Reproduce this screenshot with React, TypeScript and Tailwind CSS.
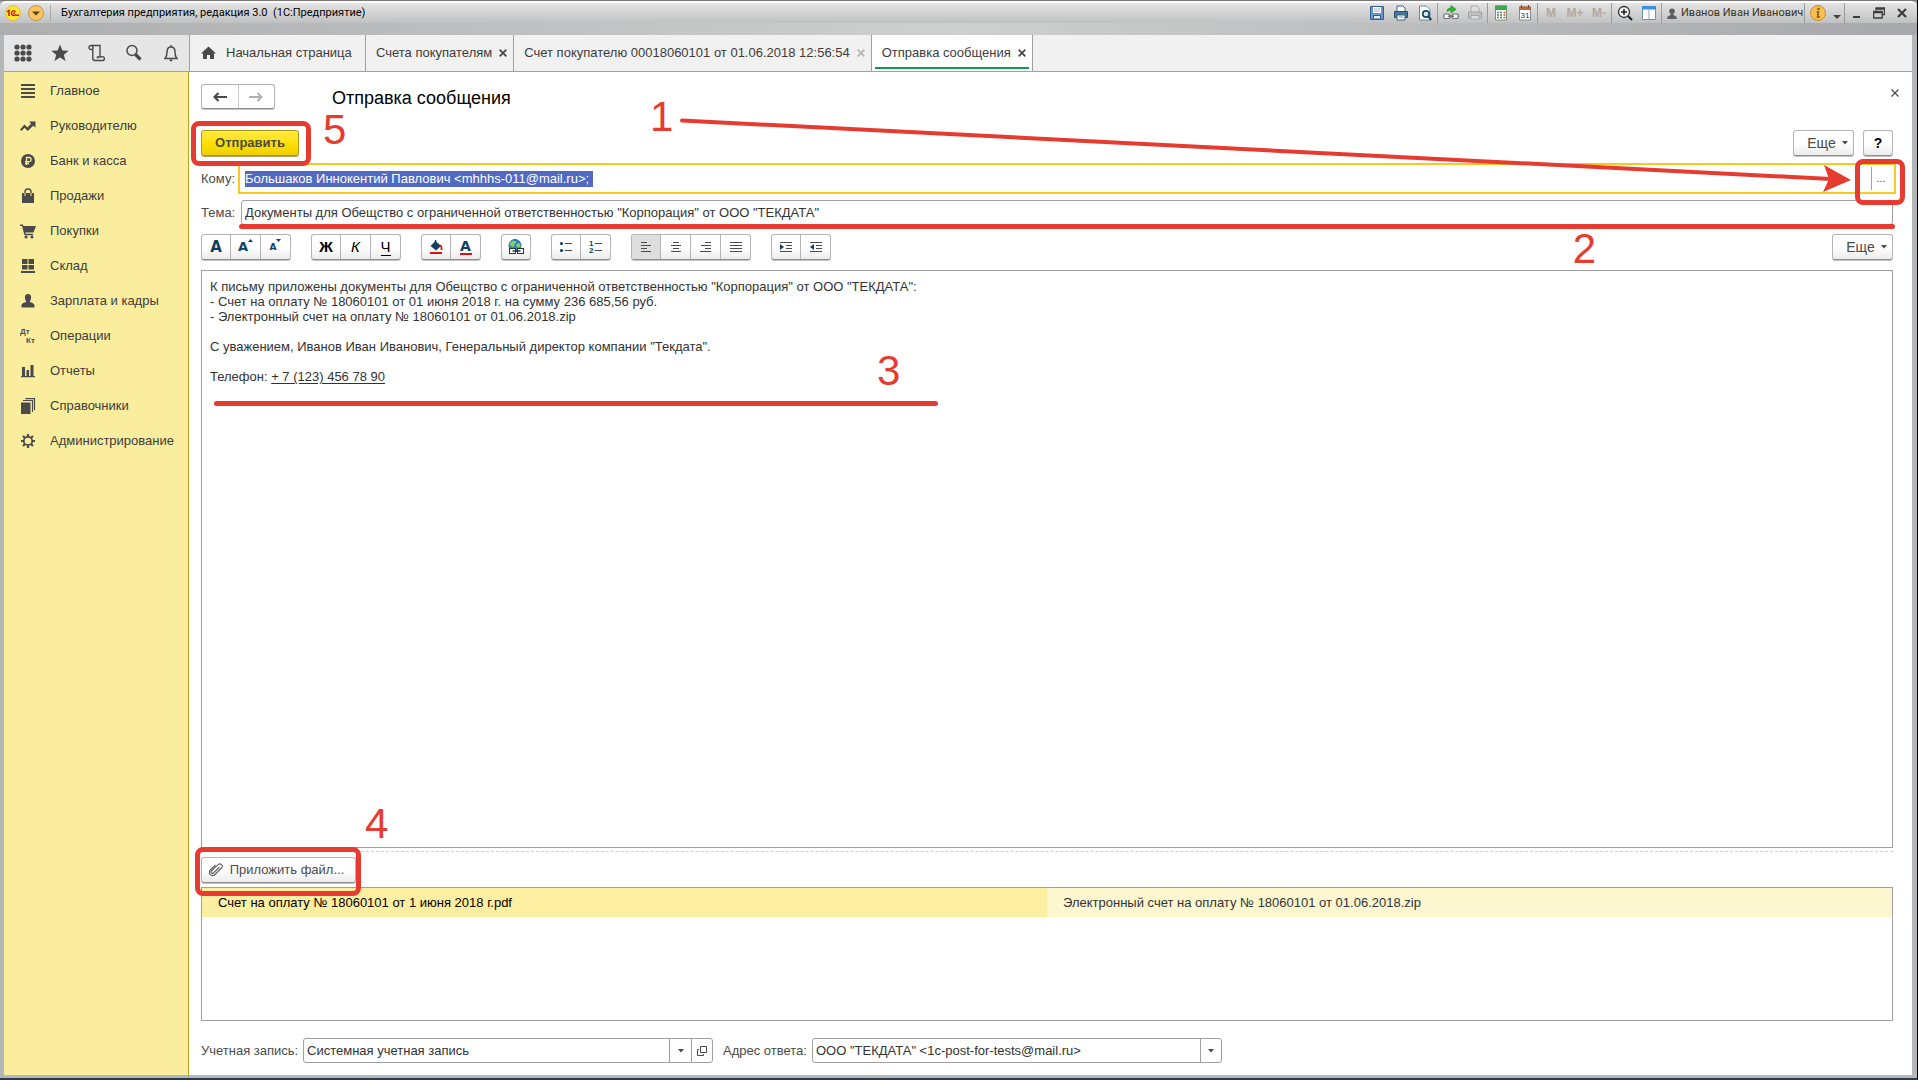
import { useEffect, useRef, type ReactNode } from 'react'
import clsx from 'clsx'

const INK = '#4a4a4a'
const NAVY = '#123f5f'

/* Sidebar icons */

const menuIcons: Record<string, ReactNode> = {
  main: <path d="M1 1h14v2H1zM1 5h14v2H1zM1 9h14v2H1zM1 13h14v2H1z" />,
  manager: (
    <path d="M0 11.5 4.500 6.500l3 3L11 5.800 9.200 3.500H15.500v6L13.200 7.700 7.700 13l-3.200-3.200L1.500 13z" />
  ),
  bank: (
    <>
      <circle cx="8" cy="8" r="7" />
      <path d="M6.500 12V4.500h2.500a2 2 0 0 1 0 4.200H5M5 10.500h4" fill="none" stroke="#fbed9e" strokeWidth="1.300" />
    </>
  ),
  sales: (
    <>
      <path d="M2 5h12v10H2z" />
      <path d="M5 8V4a3 3 0 0 1 6 0v4" fill="none" stroke={INK} strokeWidth="1.400" />
      <path d="M5 5v3M11 5v3" stroke="#fbed9e" strokeWidth="1" />
    </>
  ),
  purchases: (
    <>
      <path d="M0 1.500h3L3.500 3H16l-2.500 6.500H5.300l.4 1.300H13v1.400H4.500L2 3H0z" />
      <circle cx="6" cy="14" r="1.500" />
      <circle cx="12" cy="14" r="1.500" />
    </>
  ),
  stock: <path d="M2 1h5.500v5H2zM8.500 1H14v5H8.500zM2 7h5.500v4.500H2zM8.500 7H14v4.500H8.500zM1 13h14v2H1z" />,
  staff: (
    <path d="M8 1c2.200 0 3.300 1.600 3.100 3.800C10.900 7 9.800 8.500 9.800 8.500c0 1.200 4.700.8 4.700 4.500v1.500h-13V13c0-3.700 4.700-3.300 4.700-4.500 0 0-1.100-1.500-1.300-3.700C4.700 2.600 5.800 1 8 1z" />
  ),
  operations: (
    <g fontFamily="Liberation Sans, sans-serif" fontWeight="700" fontSize="8">
      <text x="0" y="6">Дт</text>
      <text x="6" y="15">Кт</text>
    </g>
  ),
  reports: <path d="M2 4h3v9H2zM6.500 7h2.500v6H6.500zM10.500 2h3v11h-3zM1 13h14v1.300H1z" />,
  catalogs: (
    <>
      <path d="M1 4.500h9.500V16H1z" />
      <path d="M3 2.500h9.500V14M5.500.7h9V12" fill="none" stroke={INK} strokeWidth="1.200" />
    </>
  ),
  admin: (
    <>
      <circle cx="8" cy="8" r="4.200" fill="none" stroke={INK} strokeWidth="1.800" />
      <path
        d="M8 1v2.500M8 12.500V15M1 8h2.500M12.500 8H15M3 3l1.800 1.800M11.200 11.200 13 13M13 3l-1.800 1.800M4.800 11.200 3 13"
        stroke={INK}
        strokeWidth="2.200"
      />
    </>
  ),
}

const menu = [
  { id: 'main', title: 'Главное' },
  { id: 'manager', title: 'Руководителю' },
  { id: 'bank', title: 'Банк и касса' },
  { id: 'sales', title: 'Продажи' },
  { id: 'purchases', title: 'Покупки' },
  { id: 'stock', title: 'Склад' },
  { id: 'staff', title: 'Зарплата и кадры' },
  { id: 'operations', title: 'Операции' },
  { id: 'reports', title: 'Отчеты' },
  { id: 'catalogs', title: 'Справочники' },
  { id: 'admin', title: 'Администрирование' },
]

/* Title bar */

function TitleButton({ label, className = 'w-6', children }: { label: string; className?: string; children: ReactNode }) {
  return (
    <button type="button" aria-label={label} className={clsx('flex h-5 shrink-0 items-center justify-center', className)}>
      {children}
    </button>
  )
}

function TitleIcon({ children }: { children: ReactNode }) {
  return (
    <svg width="16" height="16" viewBox="0 0 16 16">
      {children}
    </svg>
  )
}

function TitleSeparator() {
  return <span className="mr-px h-5 w-px bg-[#9b9b9b]" />
}

const printerShape = (
  <>
    <path d="M4 1h6l2 2v4H4z" fill="#fff" stroke="#40647f" />
    <path d="M1.500 6.500h13v6h-13z" fill="#46769a" stroke="#244f70" />
    <path d="M4 10h8v5H4z" fill="#fff" stroke="#40647f" />
    <path d="M5.500 12h5" stroke="#7d98ab" />
  </>
)

const linkShape = (
  <g fill="#f5f5f5" stroke="#707070" strokeWidth="1.200">
    <rect x=".8" y="9" width="6" height="4.500" rx="1" />
    <rect x="9.200" y="9" width="6" height="4.500" rx="1" />
    <path d="M5 11.200h6" strokeWidth="1.500" />
  </g>
)

function TitleBar() {
  return (
    <header className="border-t border-[#7c7879] bg-linear-to-r from-[#adaeb0] via-[#cfcfcf] to-[#a7a8ab] pb-3">
      <div className="flex h-[22px] items-center rounded-t-md border-t-2 border-white bg-linear-to-b from-[#e4e4e4] to-[#c0c1c2] pr-[3px] pl-1">
        <TitleButton label="Главное меню" className="w-[18px]">
          <svg width="16" height="16" viewBox="0 0 16 16">
            <circle cx="8" cy="8" r="7.500" fill="#ffe631" stroke="#e3bd4a" />
            <path d="M2 7l2-1.500V11" fill="none" stroke="#d41111" strokeWidth="1.500" />
            <path d="M10.500 6.800a2.200 2.200 0 1 0-2.200 3.400H14M10 8.300H8.500" fill="none" stroke="#d41111" strokeWidth="1.400" />
          </svg>
        </TitleButton>
        <TitleButton label="Сервис" className="ml-1 w-5">
          <svg width="16" height="16" viewBox="0 0 16 16">
            <circle cx="8" cy="8" r="7.500" fill="#f8c561" stroke="#cc9344" />
            <path d="M4 6.500h8L8 10.500z" fill="#5b4214" />
          </svg>
        </TitleButton>
        <span className="ml-1 h-4 w-px bg-[#aaa]" />
        <h1 className="ml-[10px] grow pt-px font-[Roboto,sans-serif] text-[11px] whitespace-pre text-black">
          Бухгалтерия предприятия, редакция 3.0  (1С:Предприятие)
        </h1>

        <TitleButton label="Сохранить">
          <TitleIcon>
            <path d="M1.500 1.500h13v13h-13z" fill="#6c95cb" stroke="#365d91" />
            <path d="M4 2h8v6H4z" fill="#fff" />
            <path d="M5 4h6M5 6h6" stroke="#9bb5d8" />
            <path d="M4.500 10.500h7V14h-7z" fill="#e8eef6" stroke="#365d91" />
          </TitleIcon>
        </TitleButton>
        <TitleButton label="Печать">
          <TitleIcon>{printerShape}</TitleIcon>
        </TitleButton>
        <TitleButton label="Предварительный просмотр">
          <TitleIcon>
            <path d="M2.500 1h7l3.500 3.500V15H2.500z" fill="#fff" stroke="#6d8796" />
            <circle cx="9" cy="9" r="3.200" fill="#d7ecf7" stroke="#15486b" strokeWidth="1.700" />
            <path d="m11.300 11.500 3 3.500" stroke="#15486b" strokeWidth="2" />
          </TitleIcon>
        </TitleButton>
        <TitleSeparator />
        <TitleButton label="Получить ссылку">
          <TitleIcon>
            {linkShape}
            <path d="M4 6.500C4 3.500 6 3 8 3V.500l5 3.800L8 8V5.500c-2 0-3 0-4 1z" fill="#2fb62a" stroke="#13820f" strokeWidth=".6" />
          </TitleIcon>
        </TitleButton>
        <TitleButton label="Печать ссылки">
          <TitleIcon>
            <path d="M4 1h6l2 2v5H4z" fill="#ddd" stroke="#a8a8a8" />
            <path d="M1.500 7h13v6h-13z" fill="#c0c0c0" stroke="#a0a0a0" />
            <path d="M4 10.500h8V14H4z" fill="#ddd" stroke="#a8a8a8" />
          </TitleIcon>
        </TitleButton>
        <TitleSeparator />
        <TitleButton label="Калькулятор">
          <TitleIcon>
            <path d="M2.500 1h11v14h-11z" fill="#fff" stroke="#6c9a72" />
            <path d="M2 .500h12V5H2z" fill="#3fa650" />
            <path d="M4 7.500h2M7 7.500h2M4 10h2M7 10h2M4 12.500h2M7 12.500h2" stroke="#5b7f60" strokeWidth="1.300" />
            <path d="M10.500 7.500h2M10.500 10h2M10.500 12.500h2" stroke="#c7504c" strokeWidth="1.300" />
          </TitleIcon>
        </TitleButton>
        <TitleButton label="Календарь">
          <TitleIcon>
            <path d="M2.500 2h11v13h-11z" fill="#fff" stroke="#8b8b8b" />
            <path d="M2 1.500h12V5H2z" fill="#b66a3c" />
            <path d="M4.500 0v3M11.500 0v3" stroke="#7a4526" />
            <text x="3.500" y="13" fontSize="8" fontFamily="Liberation Sans, sans-serif" fill="#333">31</text>
          </TitleIcon>
        </TitleButton>
        <TitleSeparator />
        {['M', 'M+', 'M-'].map((m) => (
          <TitleButton key={m} label={m}>
            <span className="font-['Liberation_Sans',sans-serif] text-[12px] font-bold text-[#b5a79c]">{m}</span>
          </TitleButton>
        ))}
        <TitleSeparator />
        <TitleButton label="Масштаб">
          <TitleIcon>
            <circle cx="7" cy="7" r="5.500" fill="#f2f2f2" stroke="#333" strokeWidth="1.300" />
            <path d="M7 4v6M4 7h6" stroke="#222" strokeWidth="1.500" />
            <path d="m11 11 4 4" stroke="#222" strokeWidth="2.200" />
          </TitleIcon>
        </TitleButton>
        <TitleButton label="Панели">
          <TitleIcon>
            <path d="M1.500 1.500h13v13h-13z" fill="#fff" stroke="#6f8fae" />
            <path d="M1 1h14v3.500H1z" fill="#3d8edb" />
            <path d="M8 4.500V14" stroke="#8da6be" />
          </TitleIcon>
        </TitleButton>
        <TitleSeparator />
        <button
          type="button"
          className="ml-1 flex w-[137px] shrink-0 items-center gap-1 font-[Roboto,sans-serif] text-[11px] whitespace-nowrap text-[#3f3215]"
        >
          <svg width="10" height="11" viewBox="0 0 10 12" fill="#5d5d5d" className="shrink-0">
            <circle cx="5" cy="3.500" r="3" />
            <path d="M3.500 5h3v2.500l3.500 2V12H0V9.500l3.500-2z" />
          </svg>
          Иванов Иван Иванович
        </button>
        <TitleSeparator />
        <TitleButton label="О программе">
          <svg width="16" height="16" viewBox="0 0 16 16">
            <circle cx="8" cy="8" r="7.500" fill="#f7bf50" stroke="#c98c33" />
            <circle cx="8.500" cy="4" r="1.300" fill="#8a5a14" />
            <path d="M6.500 7h2L7.500 12H10" fill="none" stroke="#8a5a14" strokeWidth="1.600" />
          </svg>
        </TitleButton>
        <TitleButton label="Еще команды" className="w-[14px]">
          <svg width="8" height="4" viewBox="0 0 8 4" className="mt-2">
            <path d="M0 0h8L4 4z" fill="#444" />
          </svg>
        </TitleButton>
        <TitleSeparator />
        <TitleButton label="Свернуть" className="w-[22px]">
          <svg width="12" height="12" viewBox="0 0 12 12">
            <path d="M2 10h7" stroke="#3c3c3c" strokeWidth="2" />
          </svg>
        </TitleButton>
        <TitleButton label="Восстановить" className="w-[22px]">
          <svg width="12" height="12" viewBox="0 0 12 12" fill="none" stroke="#3c3c3c">
            <path d="M3 3.500V1h8.500v6.500H9.500M3 2h8" strokeWidth="1.300" />
            <path d="M.700 4.500h8.500V11H.700zM1 5.500h8" strokeWidth="1.300" />
          </svg>
        </TitleButton>
        <TitleButton label="Закрыть">
          <svg width="12" height="12" viewBox="0 0 12 12">
            <path d="m2 2 8 8M10 2l-8 8" stroke="#3c3c3c" strokeWidth="2.200" />
          </svg>
        </TitleButton>
      </div>
    </header>
  )
}

/* Tabs */

const tools: { label: string; icon: ReactNode }[] = [
  {
    label: 'Все функции',
    icon: [3, 9, 15].map((y) => [3, 9, 15].map((x) => <circle key={`${x}-${y}`} cx={x} cy={y} r="2.600" fill={INK} />)),
  },
  { label: 'Избранное', icon: <path d="M9 .500l2.400 5.900 6.300.3-4.900 4 1.700 6.200L9 13.400l-5.500 3.500 1.700-6.200-4.900-4 6.300-.3z" fill={INK} /> },
  {
    label: 'История',
    icon: (
      <path
        d="M4.500 5.500H3a2 2 0 1 1 0-4h9v11.500M4.800 3.500V14.500a2 2 0 0 0 2 2H15a2 2 0 1 0-1.800-3.500H9.500v1.500M3 1.500a2 2 0 0 1 2 2"
        fill="none"
        stroke={INK}
        strokeWidth="1.400"
      />
    ),
  },
  {
    label: 'Поиск',
    icon: (
      <>
        <circle cx="7" cy="6.500" r="5" fill="none" stroke={INK} strokeWidth="1.500" />
        <path d="m10.500 10.500 5 5" stroke={INK} strokeWidth="3.200" />
      </>
    ),
  },
  {
    label: 'Оповещения',
    icon: (
      <>
        <path d="M2 14.500h14M3.500 14c1.500-2 1.500-3 1.500-6 0-3 1.500-5 4-5s4 2 4 5c0 3 0 4 1.500 6M9 3V1" fill="none" stroke={INK} strokeWidth="1.500" />
        <path d="M7 15.500h4L9 18z" fill={INK} />
      </>
    ),
  },
]

const tabs = [
  { title: 'Счета покупателям' },
  { title: 'Счет покупателю 00018060101 от 01.06.2018 12:56:54', locked: true },
  { title: 'Отправка сообщения', active: true },
]

function Cross() {
  return (
    <svg width="8" height="8" viewBox="0 0 8 8">
      <path d="m.700.700 6.600 6.600M7.300.700.700 7.300" stroke="currentColor" strokeWidth="1.800" />
    </svg>
  )
}

function TabBar() {
  return (
    <nav className="flex h-[37px] border-b border-[#a0a0a0] bg-[#f1f1f1]">
      <div className="flex w-[186px] shrink-0 items-center border-r border-[#a0a0a0] bg-[#e6e6e6]">
        {tools.map((tool) => (
          <button key={tool.label} type="button" aria-label={tool.label} className="flex flex-1 justify-center">
            <svg width="18" height="18" viewBox="0 0 18 18">
              {tool.icon}
            </svg>
          </button>
        ))}
      </div>
      <button type="button" className="flex w-44 items-center gap-[10px] border-r border-[#a0a0a0] pl-[11px]">
        <svg width="15" height="14" viewBox="0 0 15 14" fill={INK}>
          <path d="M7.500.500 15 7.500h-2V13H9V9H6v4H2V7.500H0z" />
        </svg>
        Начальная страница
      </button>
      {tabs.map((tab) => (
        <div
          key={tab.title}
          className={clsx(
            'relative flex items-center gap-[7px] border-r border-[#a0a0a0] pr-[6px] pl-[10px] whitespace-nowrap',
            tab.active && 'bg-white',
          )}
        >
          <button type="button">{tab.title}</button>
          <button type="button" aria-label="Закрыть вкладку" className={tab.locked ? 'text-[#b5b5b5]' : 'text-[#4a4a4a]'}>
            <Cross />
          </button>
          {tab.active && <span className="absolute inset-x-[3px] bottom-[2px] h-[2px] bg-[#0f9a52]" />}
        </div>
      ))}
    </nav>
  )
}

/* Form parts */

const buttonFace =
  'flex h-[26px] items-center justify-center rounded-[3px] border border-[#b4b4b4] border-b-[#8f8f8f] bg-linear-to-b from-white from-50% to-[#ececec] shadow-[0_1px_0_#c4c4c4]'

function Caret() {
  return (
    <svg width="6" height="4" viewBox="0 0 6 4">
      <path d="M0 0h6L3 3.500z" fill={INK} />
    </svg>
  )
}

function MoreButton() {
  return (
    <button type="button" className={clsx(buttonFace, 'w-[61px] gap-[6px] pl-2 text-[14px]')}>
      Еще
      <Caret />
    </button>
  )
}

type Tool = { label: string; icon: ReactNode; pressed?: boolean }

function ToolGroup({ items }: { items: Tool[] }) {
  return (
    <div className="flex h-[26px] divide-x divide-[#b4b4b4] overflow-hidden rounded-[3px] border border-[#b4b4b4] border-b-[#8f8f8f] bg-linear-to-b from-white from-50% to-[#ececec] shadow-[0_1px_0_#c4c4c4]">
      {items.map((item, i) => (
        <button
          key={item.label}
          type="button"
          aria-label={item.label}
          aria-pressed={item.pressed}
          className={clsx(
            'flex items-center justify-center aria-pressed:bg-[#dedede]',
            items.length === 1 ? 'w-7' : i === 0 || i === items.length - 1 ? 'w-[29px]' : 'w-[30px]',
          )}
        >
          {item.icon}
        </button>
      ))}
    </div>
  )
}

function Glyph({ children }: { children: ReactNode }) {
  return (
    <svg width="16" height="16" viewBox="0 0 16 16" fill="none" stroke={INK}>
      {children}
    </svg>
  )
}

const letterA = "font-['DejaVu_Sans',sans-serif] leading-4 font-bold text-[#123f5f]"
const letterFormat = "font-['Liberation_Sans',sans-serif] text-[15px] leading-4 text-black"

const toolGroups: Tool[][] = [
  [
    { label: 'Шрифт', icon: <span className={clsx(letterA, 'text-[15px]')}>A</span> },
    {
      label: 'Увеличить шрифт',
      icon: (
        <span className={clsx(letterA, 'flex items-start text-[13px]')}>
          A
          <svg width="5" height="3" viewBox="0 0 5 3">
            <path d="M0 3h5L2.500 0z" fill={NAVY} />
          </svg>
        </span>
      ),
    },
    {
      label: 'Уменьшить шрифт',
      icon: (
        <span className={clsx(letterA, 'flex items-start text-[9px]')}>
          A
          <svg width="5" height="3" viewBox="0 0 5 3">
            <path d="M0 0h5L2.500 3z" fill={NAVY} />
          </svg>
        </span>
      ),
    },
  ],
  [
    { label: 'Полужирный', icon: <span className={clsx(letterFormat, 'font-bold')}>Ж</span> },
    { label: 'Курсив', icon: <span className={clsx(letterFormat, 'italic')}>К</span> },
    { label: 'Подчеркнутый', icon: <span className={clsx(letterFormat, 'border-b border-black')}>Ч</span> },
  ],
  [
    {
      label: 'Цвет фона',
      icon: (
        <Glyph>
          <path d="M7.500 2 13 7l-5 4.500L2.500 7z" fill={NAVY} stroke="none" />
          <path d="M7.500 5V1" stroke={NAVY} strokeWidth="1.500" />
          <path d="M11.500 6c2 .5 2.300 2.500 2 5" stroke="#e01010" strokeWidth="1.800" />
          <path d="M2 14h12" stroke="#e01010" strokeWidth="2" />
        </Glyph>
      ),
    },
    {
      label: 'Цвет текста',
      icon: (
        <span className="flex flex-col items-center">
          <span className="font-['DejaVu_Sans',sans-serif] text-[14px] leading-[13px] font-bold text-[#123f5f]">A</span>
          <span className="h-[2px] w-3 bg-[#e01010]" />
        </span>
      ),
    },
  ],
  [
    {
      label: 'Гиперссылка',
      icon: (
        <Glyph>
          <circle cx="7" cy="6.500" r="6" fill="#2487cf" stroke="#1b69a8" />
          <path d="M3 3c2-2 4-1.500 5-.5S6 5 6 7 3 7 2 6s0-2 1-3zM9 5c1-1 3-1 3.500 1S10 9 9 8s-1-2 0-3z" fill="#8fcf4c" stroke="none" />
          <rect x="1.500" y="9.500" width="6" height="5" fill="#fff" stroke="#333" />
          <rect x="9.500" y="9.500" width="6" height="5" fill="#fff" stroke="#333" />
          <path d="M4.500 12h8" stroke="#333" strokeWidth="1.500" />
        </Glyph>
      ),
    },
  ],
  [
    {
      label: 'Маркированный список',
      icon: (
        <Glyph>
          <path d="M7 4.500h7M7 11.500h7" />
          <circle cx="3.500" cy="4.500" r="1.600" fill={NAVY} stroke="none" />
          <circle cx="3.500" cy="11.500" r="1.600" fill={NAVY} stroke="none" />
        </Glyph>
      ),
    },
    {
      label: 'Нумерованный список',
      icon: (
        <Glyph>
          <path d="M7 4.500h7M7 11.500h7" />
          <g fill={NAVY} stroke="none" fontFamily="Liberation Sans, sans-serif" fontWeight="700" fontSize="8">
            <text x="1" y="7">1</text>
            <text x="1" y="14">2</text>
          </g>
        </Glyph>
      ),
    },
  ],
  [
    { label: 'По левому краю', pressed: true, icon: <Glyph><path d="M3 3.500h6M3 6.500h10M3 9.500h6M3 12.500h10" /></Glyph> },
    { label: 'По центру', icon: <Glyph><path d="M5 3.500h6M3 6.500h10M5 9.500h6M3 12.500h10" /></Glyph> },
    { label: 'По правому краю', icon: <Glyph><path d="M7 3.500h6M3 6.500h10M7 9.500h6M2 12.500h11" /></Glyph> },
    { label: 'По ширине', icon: <Glyph><path d="M2 3.500h12M2 6.500h12M2 9.500h12M2 12.500h12" /></Glyph> },
  ],
  [
    {
      label: 'Увеличить отступ',
      icon: (
        <Glyph>
          <path d="M2 3.500h12M8 6.500h6M8 9.500h6M2 12.500h12" />
          <path d="M2 5v6l4-3z" fill={NAVY} stroke="none" />
        </Glyph>
      ),
    },
    {
      label: 'Уменьшить отступ',
      icon: (
        <Glyph>
          <path d="M2 3.500h12M8 6.500h6M8 9.500h6M2 12.500h12" />
          <path d="M6 5v6L2 8z" fill={NAVY} stroke="none" />
        </Glyph>
      ),
    },
  ],
]

/* Red marks drawn over the form */

function StepNumber({ className, children }: { className: string; children: ReactNode }) {
  return (
    <span className={clsx("pointer-events-none absolute font-['Liberation_Sans',sans-serif] text-[42px] leading-none text-[#e63b31]", className)}>
      {children}
    </span>
  )
}

function StepFrame({ className }: { className: string }) {
  return <span className={clsx('pointer-events-none absolute rounded-lg border-5 border-[#e63b31]', className)} />
}

function StepLine({ className }: { className: string }) {
  return <span className={clsx('pointer-events-none absolute h-[5px] rounded-full bg-[#e63b31]', className)} />
}

function StepArrow() {
  return (
    <div className="pointer-events-none absolute top-[46px] right-[61px] left-[490px] z-10 flex h-[76px]">
      <svg className="-mr-[10px] h-full min-w-0 grow" viewBox="0 0 1150 76" preserveAspectRatio="none">
        <path d="M3 2.500 1148 61" stroke="#e63b31" strokeWidth="4" strokeLinecap="round" />
      </svg>
      <svg className="h-full w-7 shrink-0" viewBox="0 0 28 76">
        <path d="M1 47 28 62 0 74 6 61z" fill="#e63b31" />
      </svg>
    </div>
  )
}

const attachments = [
  { name: 'Счет на оплату № 18060101 от 1 июня 2018 г.pdf', selected: true },
  { name: 'Электронный счет на оплату № 18060101 от 01.06.2018.zip' },
]

function MessageForm() {
  const toRef = useRef<HTMLInputElement>(null)

  useEffect(() => {
    toRef.current?.focus()
    toRef.current?.select()
  }, [])

  return (
    <main className="relative flex grow flex-col bg-white pr-[19px] pl-3 text-[#4a4a4a]">
      <div className="flex h-[58px] items-start pt-3">
        <div className="flex h-[25px] w-[74px] divide-x divide-[#c8c8c8] rounded-[3px] border border-[#b4b4b4] border-b-[#8f8f8f] shadow-[0_1px_0_#c4c4c4]">
          <button type="button" aria-label="Назад" className="flex flex-1 items-center justify-center">
            <svg width="14" height="10" viewBox="0 0 14 10">
              <path d="M14 5H3M5.500 1 1.500 5l4 4" fill="none" stroke={INK} strokeWidth="2.200" />
            </svg>
          </button>
          <button type="button" aria-label="Вперед" disabled className="flex flex-1 items-center justify-center">
            <svg width="14" height="10" viewBox="0 0 14 10">
              <path d="M0 5h11M8.500 1l4 4-4 4" fill="none" stroke="#b0b0b0" strokeWidth="2" />
            </svg>
          </button>
        </div>
        <h2 className="ml-[57px] grow text-[18px] leading-7 text-black">Отправка сообщения</h2>
        <button type="button" aria-label="Закрыть" className="mt-[5px] -mr-[6px]">
          <svg width="8" height="8" viewBox="0 0 8 8">
            <path d="m.500.500 7 7M7.500.500l-7 7" stroke={INK} strokeWidth="1.200" />
          </svg>
        </button>
      </div>

      <div className="flex h-[26px]">
        <div className="relative">
          <button
            type="button"
            className="h-[26px] w-[98px] rounded-[3px] border border-[#a99a1c] bg-linear-to-b from-[#ffe93b] via-[#ffe100] to-[#f0cf00] text-[13px] font-bold shadow-[0_1px_0_#a8a06a]"
          >
            Отправить
          </button>
          <StepFrame className="-top-[9px] -bottom-[10px] -left-[10px] z-10 w-[120px]" />
          <StepNumber className="-top-[21px] left-[122px]">5</StepNumber>
        </div>
        <div className="ml-auto flex gap-[9px]">
          <MoreButton />
          <button type="button" aria-label="Справка" className={clsx(buttonFace, 'w-[30px] text-[14px] font-bold text-black')}>
            ?
          </button>
        </div>
      </div>

      <div className="-mr-[3px] mt-[7px] flex items-center">
        <label htmlFor="to" className="w-[37px]">Кому:</label>
        <div className="relative flex h-[31px] grow items-center border-2 border-[#fac81e]">
          <input
            id="to"
            ref={toRef}
            defaultValue="Большаков Иннокентий Павлович <mhhhs-011@mail.ru>; "
            className="h-4 grow px-[5px] leading-4 text-[#333] outline-none selection:bg-[#5269c3] selection:text-white"
          />
          <button
            type="button"
            aria-label="Выбрать получателя"
            className="h-[23px] w-[23px] border-l border-[#a0a0a0] pr-1 text-center text-[11px]"
          >
            ...
          </button>
          <StepFrame className="-top-[6px] -right-[11px] z-10 h-[46px] w-[50px]" />
        </div>
      </div>

      <div className="mt-[6px] flex items-center">
        <label htmlFor="subject" className="w-10">Тема:</label>
        <div className="relative grow">
          <input
            id="subject"
            defaultValue={'Документы для Обещство с ограниченной ответственностью "Корпорация" от ООО "ТЕКДАТА"'}
            className="block h-[25px] w-full rounded-[3px] border border-[#a0a0a0] px-[3px] text-[#333] outline-none"
          />
          <StepLine className="-right-[2px] -bottom-1 -left-[2px]" />
          <StepNumber className="top-7 right-[297px]">2</StepNumber>
        </div>
      </div>

      <div className="mt-[9px] flex gap-5">
        {toolGroups.map((items) => (
          <ToolGroup key={items[0].label} items={items} />
        ))}
        <div className="ml-auto">
          <MoreButton />
        </div>
      </div>

      <div className="relative mt-[10px] grow border border-[#a0a0a0] px-2 pt-2">
        <div
          role="textbox"
          aria-label="Текст письма"
          aria-multiline="true"
          contentEditable
          suppressContentEditableWarning
          className="leading-[15px] text-[#333] outline-none"
        >
          <p>К письму приложены документы для Обещство с ограниченной ответственностью "Корпорация" от ООО "ТЕКДАТА":</p>
          <p>- Счет на оплату № 18060101 от 01 июня 2018 г. на сумму 236 685,56 руб.</p>
          <p>- Электронный счет на оплату № 18060101 от 01.06.2018.zip</p>
          <br />
          <p>С уважением, Иванов Иван Иванович, Генеральный директор компании "Текдата".</p>
          <br />
          <p>
            Телефон: <a href="tel:+71234567890" className="underline underline-offset-2">+ 7 (123) 456 78 90</a>
          </p>
        </div>
        <StepNumber className="top-[79px] left-[675px]">3</StepNumber>
        <StepLine className="top-[130px] left-3 w-[724px]" />
        <StepNumber className="bottom-[2px] left-[163px]">4</StepNumber>
      </div>

      <div className="mt-[3px] border-t border-dashed border-[#cfcfcf] pt-[5px]">
        <div className="relative w-[155px]">
          <button type="button" className={clsx(buttonFace, 'w-full gap-[7px] pr-1 text-[13px]')}>
            <svg width="14" height="14" viewBox="0 0 14 14" fill="none" stroke="#666" strokeWidth="1.200">
              <path d="m10.500 4-6 6a1.300 1.300 0 0 1-2-2l6.500-6.300a2.300 2.300 0 0 1 3.500 3.300L6 11.500a3.200 3.200 0 0 1-4.700-4.500L6.500 2" />
            </svg>
            Приложить файл...
          </button>
          <StepFrame className="-top-[10px] -right-[5px] -bottom-[13px] -left-[6px] z-10" />
        </div>
      </div>

      <ul className="mt-1 grid h-[134px] grid-cols-2 content-start border border-[#a0a0a0]">
        {attachments.map((file) => (
          <li
            key={file.name}
            className={clsx('h-[29px] px-4 leading-[29px]', file.selected ? 'bg-[#fdefa2] text-black' : 'bg-[#fdf7d0] text-[#333]')}
          >
            {file.name}
          </li>
        ))}
      </ul>

      <div className="mt-[17px] mb-3 flex items-center">
        <label htmlFor="account" className="w-[102px]">Учетная запись:</label>
        <div className="flex h-[25px] w-[410px] rounded-[3px] border border-[#a0a0a0]">
          <div className="relative grow">
            <select id="account" className="h-full w-full appearance-none px-[3px] text-[#333] outline-none">
              <option>Системная учетная запись</option>
            </select>
            <span className="pointer-events-none absolute inset-y-0 right-0 flex w-[22px] items-center justify-center border-l border-[#a0a0a0]">
              <Caret />
            </span>
          </div>
          <button type="button" aria-label="Открыть" className="flex w-[21px] items-center justify-center border-l border-[#a0a0a0]">
            <svg width="10" height="10" viewBox="0 0 10 10" fill="none" stroke={INK}>
              <path d="M3.500.500h6v6h-6zM2 3.500H.500v6h6V8" />
            </svg>
          </button>
        </div>
        <label htmlFor="reply" className="ml-[10px] w-[89px]">Адрес ответа:</label>
        <div className="relative h-[25px] w-[410px] rounded-[3px] border border-[#a0a0a0]">
          <select id="reply" className="h-full w-full appearance-none px-[3px] text-[#333] outline-none">
            <option>{'ООО "ТЕКДАТА" <1c-post-for-tests@mail.ru>'}</option>
          </select>
          <span className="pointer-events-none absolute inset-y-0 right-0 flex w-[21px] items-center justify-center border-l border-[#a0a0a0]">
            <Caret />
          </span>
        </div>
      </div>

      <StepNumber className="top-6 left-[461px]">1</StepNumber>
      <StepArrow />
    </main>
  )
}

export default function App() {
  return (
    <div className="flex min-h-screen flex-col border-r border-b-2 border-r-black border-b-[#2c3a4a] bg-[#b4b6b8] font-['Liberation_Sans',sans-serif] text-[13px] text-[#3c3c3c]">
      <TitleBar />
      <div className="mr-[5px] mb-[3px] ml-1 flex grow flex-col">
        <TabBar />
        <div className="flex grow">
          <aside className="w-[185px] shrink-0 border-r border-[#b9a31c] bg-[#fbed9e] pt-px">
            {menu.map((item) => (
              <a key={item.id} href={`#${item.id}`} className="flex h-[35px] items-center gap-[14px] pl-4">
                <svg width="16" height="16" viewBox="0 0 16 16" fill={INK}>
                  {menuIcons[item.id]}
                </svg>
                {item.title}
              </a>
            ))}
          </aside>
          <MessageForm />
        </div>
      </div>
    </div>
  )
}
